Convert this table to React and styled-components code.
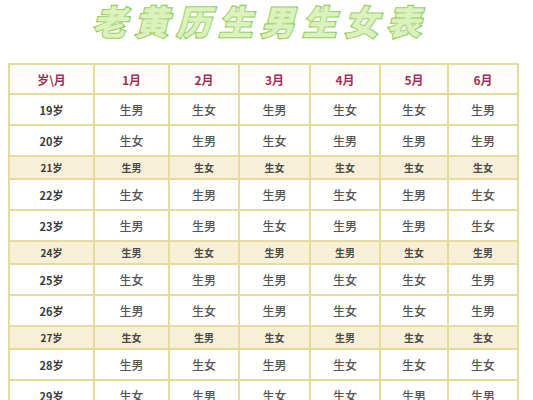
import React from "react";
import styled, { createGlobalStyle } from "styled-components";

const GlobalStyle = createGlobalStyle`
  html, body {
    margin: 0;
    background: #ffffff;
  }
  body {
    padding: 0 8px;
    font-family: "Noto Sans CJK SC", "Noto Sans", sans-serif;
  }
`;

const Page = styled.main`
  width: 517px;
`;

// <h1>
const Title = styled.h1`
  margin: 0;
  height: 63px;
  padding: 0 12px 0 0;
  text-align: center;
  font-family: "Noto Sans CJK SC", sans-serif;
  font-size: 34px;
  font-weight: 700;
  font-style: italic;
  letter-spacing: 8px;
  line-height: 42px;
  color: #dcf2bd;
  -webkit-text-stroke: 2.5px #84c24b;
  paint-order: stroke fill;
  text-shadow: 0 0 3px #e8f6d4;
`;

const Table = styled.table`
  width: 509px;
  border-collapse: collapse;
  table-layout: fixed;
  border: 2px solid #e4dc9c;
`;

const HeadCell = styled.th`
  height: 28px;
  padding: 0;
  border: 2px solid #e4dc9c;
  color: #a3305c;
  font-size: 12px;
  font-weight: 700;
  text-align: center;
  background: #fffefa;
`;

const Row = styled.tr`
  height: ${(p) => (p.$short ? "23px" : "31px")};
  background: ${(p) => (p.$short ? "#f7efd6" : "#ffffff")};
`;

const AgeCell = styled.td`
  padding: 0;
  border: 2px solid #e4dc9c;
  text-align: center;
  color: #3b3b3b;
  font-weight: 700;
  font-size: ${(p) => (p.$short ? "10px" : "11px")};
`;

const Cell = styled.td`
  padding: 0;
  border: 2px solid #e4dc9c;
  text-align: center;
  color: ${(p) => (p.$short ? "#4a4a4a" : "#555555")};
  font-weight: ${(p) => (p.$short ? 700 : 500)};
  font-size: ${(p) => (p.$short ? "10px" : "12px")};
`;

const widths = [85, 75, 70, 71, 70, 68, 70];
const heads = ["岁\\月", "1月", "2月", "3月", "4月", "5月", "6月"];

const M = "生男";
const F = "生女";

const rows = [
  { age: 19, v: [M, F, M, F, F, M] },
  { age: 20, v: [F, M, F, M, M, M] },
  { age: 21, short: true, v: [M, F, F, F, F, F] },
  { age: 22, v: [F, M, M, F, M, F] },
  { age: 23, v: [M, M, F, M, M, F] },
  { age: 24, short: true, v: [M, F, M, M, F, M] },
  { age: 25, v: [F, M, M, F, F, M] },
  { age: 26, v: [M, F, M, F, F, M] },
  { age: 27, short: true, v: [F, M, F, M, F, F] },
  { age: 28, v: [M, F, M, F, F, F] },
  { age: 29, v: [F, M, F, F, M, M] },
];

export default function App() {
  return (
    <Page>
      <GlobalStyle />
      <Title>老黄历生男生女表</Title>
      <Table>
        <colgroup>
          {widths.map((w, i) => (
            <col key={i} style={{ width: w }} />
          ))}
        </colgroup>
        <thead>
          <tr>
            {heads.map((h) => (
              <HeadCell key={h}>{h}</HeadCell>
            ))}
          </tr>
        </thead>
        <tbody>
          {rows.map((r) => (
            <Row key={r.age} $short={r.short}>
              <AgeCell $short={r.short}>{r.age}岁</AgeCell>
              {r.v.map((x, i) => (
                <Cell key={i} $short={r.short}>
                  {x}
                </Cell>
              ))}
            </Row>
          ))}
        </tbody>
      </Table>
    </Page>
  );
}
